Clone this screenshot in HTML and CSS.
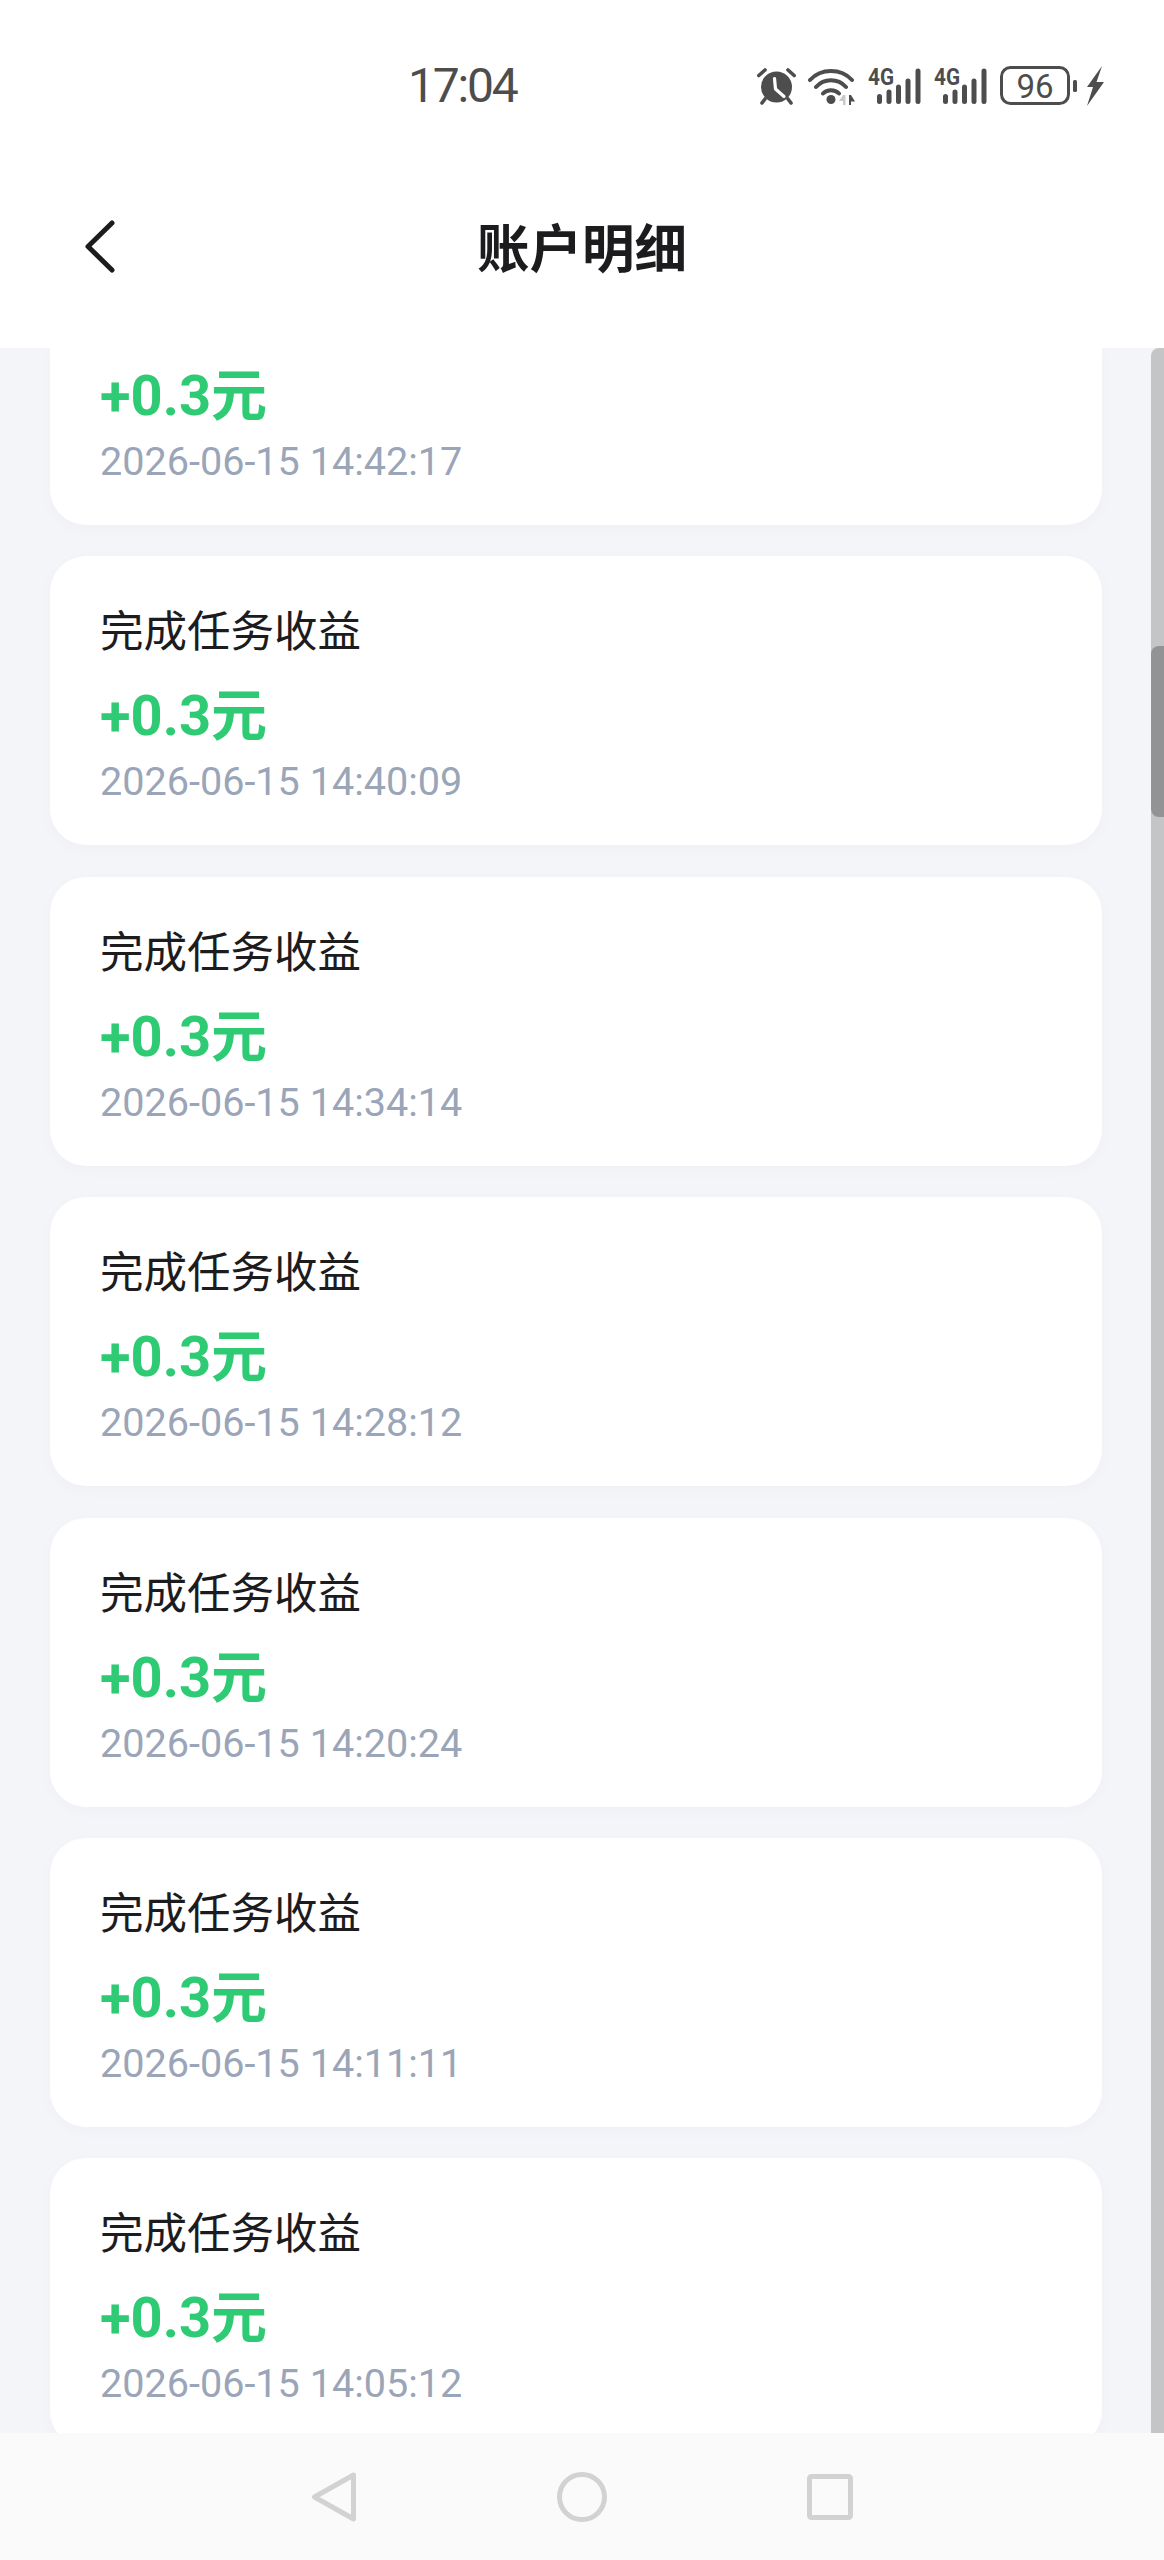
FILE: index.html
```html
<!DOCTYPE html>
<html lang="zh-CN">
<head>
<meta charset="utf-8">
<title>账户明细</title>
<link rel="stylesheet" href="styles.css">
</head>
<body>
<div class="page">
  <header class="header">
    <div class="status">
      <span class="time">17:04</span>
      <div class="status-icons">
        <svg class="i-alarm" viewBox="0 0 39 37" width="39" height="37">
          <circle cx="19.500" cy="19" r="15.500" fill="#4d4d4d"/>
          <path d="M1.800 7.500 8 2M37.200 7.500 31 2M8 31 5 35M31 31 34 35" stroke="#4d4d4d" stroke-width="3.600" stroke-linecap="round" fill="none"/>
          <path d="M17.500 10.500 18.500 21 27 28.500" stroke="#fff" stroke-width="3.200" fill="none" stroke-linecap="round" stroke-linejoin="round"/>
        </svg>
        <svg class="i-wifi" viewBox="0 0 48 37" width="48" height="37">
          <path d="M2 12C13 -0 33 -0 44 12M8 19C16 10 30 10 38 19M15 25.500C19 21 27 21 31 25.500" stroke="#4d4d4d" stroke-width="4" stroke-linecap="round" fill="none"/>
          <circle cx="23" cy="31.500" r="4.500" fill="#4d4d4d"/>
          <path d="M35 27 31 33H35V37H37.500V27Z" fill="#c9c9c9"/>
          <path d="M41 27V37H43V33.500H47L43 27Z" fill="#4d4d4d"/>
        </svg>
        <svg class="i-signal" viewBox="0 0 53 37" width="53" height="37">
          <text class="net" x="0" y="17" textLength="26" lengthAdjust="spacingAndGlyphs">4G</text>
          <path d="M11.500 28.500V33.500M21 24V33.500M30.500 19V33.500M40 13V33.500M50 3V33.500" stroke="#4d4d4d" stroke-width="5" stroke-linecap="round"/>
        </svg>
        <svg class="i-signal" viewBox="0 0 53 37" width="53" height="37">
          <text class="net" x="0" y="17" textLength="26" lengthAdjust="spacingAndGlyphs">4G</text>
          <path d="M11.500 28.500V33.500M21 24V33.500M30.500 19V33.500M40 13V33.500M50 3V33.500" stroke="#4d4d4d" stroke-width="5" stroke-linecap="round"/>
        </svg>
        <svg class="i-battery" viewBox="0 0 104 40" width="104" height="40">
          <rect x="1.500" y="1.500" width="67" height="36" rx="9" fill="none" stroke="#4d4d4d" stroke-width="3"/>
          <text class="batt" x="35" y="31.500">96</text>
          <rect x="73" y="14" width="4" height="12" rx="1.500" fill="#4d4d4d"/>
          <path d="M102 0 87 21H93L87 40 104 16H96.500Z" fill="#4d4d4d"/>
        </svg>
      </div>
    </div>
    <nav class="nav">
      <svg class="back" viewBox="0 0 30 53" width="30" height="53"><path d="M27 3 3 26.500 27 50" fill="none" stroke="#1c1c1e" stroke-width="5" stroke-linecap="round" stroke-linejoin="round"/></svg>
      <h1 class="title">账户明细</h1>
      <span></span>
    </nav>
  </header>
  <main class="scroller">
    <div class="list">
      <article class="card card-first"><p class="amount">+0.3元</p><p class="date">2026-06-15 14:42:17</p></article>
      <article class="card"><p class="label">完成任务收益</p><p class="amount">+0.3元</p><p class="date">2026-06-15 14:40:09</p></article>
      <article class="card"><p class="label">完成任务收益</p><p class="amount">+0.3元</p><p class="date">2026-06-15 14:34:14</p></article>
      <article class="card"><p class="label">完成任务收益</p><p class="amount">+0.3元</p><p class="date">2026-06-15 14:28:12</p></article>
      <article class="card"><p class="label">完成任务收益</p><p class="amount">+0.3元</p><p class="date">2026-06-15 14:20:24</p></article>
      <article class="card"><p class="label">完成任务收益</p><p class="amount">+0.3元</p><p class="date">2026-06-15 14:11:11</p></article>
      <article class="card"><p class="label">完成任务收益</p><p class="amount">+0.3元</p><p class="date">2026-06-15 14:05:12</p></article>
    </div>
    <div class="scrollbar"><div class="thumb"></div></div>
  </main>
  <footer class="sysnav">
    <svg viewBox="0 0 46 50" width="46" height="50"><path d="M42.500 3 3.500 25 42.500 47Z" fill="none" stroke="#d2d2d2" stroke-width="5" stroke-linejoin="round"/></svg>
    <svg viewBox="0 0 50 50" width="50" height="50"><circle cx="25" cy="25" r="22.500" fill="none" stroke="#d2d2d2" stroke-width="5"/></svg>
    <svg viewBox="0 0 46 46" width="46" height="46"><rect x="2.500" y="2.500" width="41" height="41" rx="2" fill="none" stroke="#d2d2d2" stroke-width="5"/></svg>
  </footer>
</div>
</body>
</html>
```
FILE: styles.css
```css
* { box-sizing: border-box; }
html, body { margin: 0; padding: 0; }
p { margin: 0; }
body {
  width: 1164px;
  height: 2560px;
  overflow: hidden;
  background: #fff;
  font-family: "Noto Sans CJK SC", "Noto Sans", sans-serif;
}
.page { display: flex; flex-direction: column; height: 2560px; }
.header { height: 348px; background: #fff; flex: none; }
.status { display: flex; align-items: center; height: 172px; padding: 0 60px 0 408px; }
.time {
  font-family: Roboto, sans-serif;
  font-size: 48px;
  line-height: 56px;
  color: #4d4d4d;
  letter-spacing: -2.2px;
}
.status-icons { margin-left: auto; display: flex; align-items: center; gap: 13px; }
.i-alarm, .i-wifi { margin-right: -1px; }
.i-signal { overflow: visible; }
.net { font-family: Roboto, sans-serif; font-size: 23px; font-weight: 700; fill: #4d4d4d; }
.batt { font-family: Roboto, sans-serif; font-size: 33px; fill: #4d4d4d; text-anchor: middle; }
.nav {
  display: grid;
  grid-template-columns: 1fr auto 1fr;
  align-items: center;
  height: 148px;
  padding: 0 85px;
}
.title { margin: 0 0 3px; font-size: 52.500px; line-height: 60px; font-weight: 700; color: #1c1c1e; }
.scroller {
  position: relative;
  flex: 1;
  min-height: 0;
  overflow: hidden;
  background: #f4f5f9;
}
.list { display: flex; flex-direction: column; gap: 31.4px; padding: 0 62px 0 50px; }
.card {
  flex: none;
  height: 289px;
  padding: 43px 50px 0;
  background: #fff;
  border-radius: 36px;
  box-shadow: 0 4px 16px rgba(30, 40, 80, 0.025);
}
.card-first { height: 177px; padding-top: 16px; border-radius: 0 0 36px 36px; }
.label { font-size: 43.500px; line-height: 60px; color: #1c1c1e; }
.amount { margin-top: 25px; font-size: 56px; line-height: 64px; font-weight: 700; color: #2fca74; font-family: Roboto, "Noto Sans CJK SC", sans-serif; }
.card-first .amount { margin-top: 0; }
.date { margin-top: 8px; font-size: 39.600px; line-height: 52px; color: #9aa5b8; font-family: Roboto, sans-serif; }
.scrollbar {
  position: absolute;
  top: 0;
  right: 0;
  bottom: 0;
  width: 13px;
  border-radius: 8px 0 0 0;
  background: #c4c5c7;
}
.thumb {
  position: absolute;
  top: 298px;
  left: 0;
  width: 13px;
  height: 171px;
  border-radius: 8px 0 0 8px;
  background: #929395;
}
.sysnav {
  flex: none;
  height: 127px;
  background: #fafafa;
  display: flex;
  align-items: center;
  padding: 0 311px;
  justify-content: space-between;
}
```
